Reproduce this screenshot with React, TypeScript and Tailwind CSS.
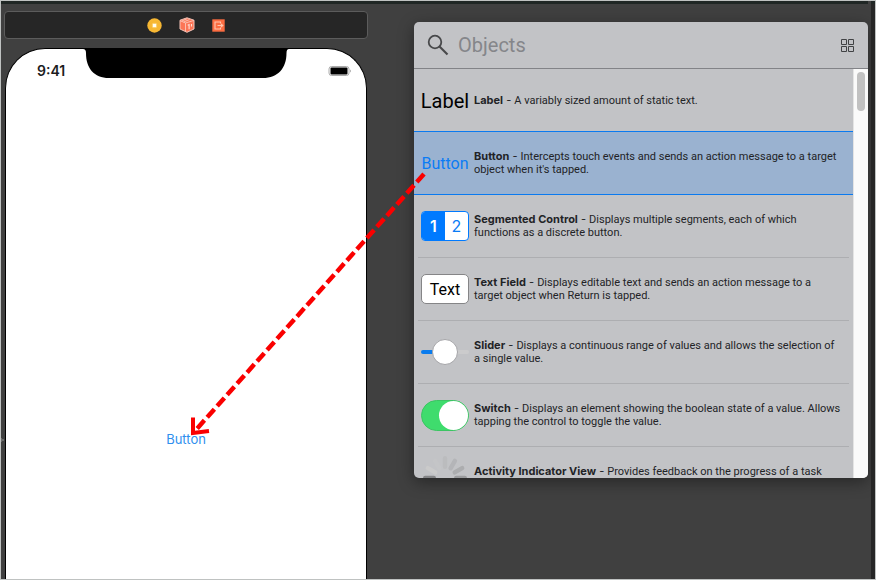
import type { ReactNode } from "react";

type LibraryItem = {
  name: string;
  lines: string[];
  preview: ReactNode;
  selected?: boolean;
};

function Spinner() {
  const shades = ["#bbbcbe", "#b4b5b8", "#acadaf", "#9b9c9e", "#97989a", "#939496", "#909193", "#8c8d8f", "#88898b", "#848587", "#cacaca", "#c4c5c7"];
  return (
    <svg viewBox="0 0 48 48" className="size-12" aria-hidden="true">
      {shades.map((shade, i) => (
        <rect key={i} x="21.8" y="2" width="4.400" height="13" rx="2.200" fill={shade} transform={`rotate(${i * 30} 24 24)`} />
      ))}
    </svg>
  );
}

const items: LibraryItem[] = [
  {
    name: "Label",
    lines: ["A variably sized amount of static text."],
    preview: <span className="pt-px text-xl text-black font-[Roboto,sans-serif]">Label</span>,
  },
  {
    name: "Button",
    lines: ["Intercepts touch events and sends an action message to a target", "object when it's tapped."],
    preview: (
      <button type="button" className="pt-px text-base text-[#0a7cf5] font-[Roboto,sans-serif]">
        Button
      </button>
    ),
    selected: true,
  },
  {
    name: "Segmented Control",
    lines: ["Displays multiple segments, each of which", "functions as a discrete button."],
    preview: (
      <div className="flex h-[30px] w-12 overflow-hidden rounded-[4px] border border-[#007aff] bg-white text-base font-[Inter,sans-serif]">
        <button type="button" className="flex-1 bg-[#007aff] font-semibold text-white">1</button>
        <button type="button" className="flex-1 text-[#0a7cf5]">2</button>
      </div>
    ),
  },
  {
    name: "Text Field",
    lines: ["Displays editable text and sends an action message to a", "target object when Return is tapped."],
    preview: (
      <input
        type="text"
        aria-label="Text Field"
        defaultValue="Text"
        className="h-[30px] w-12 rounded-[5px] border border-[#858587] bg-white text-center text-base text-black outline-none font-[Roboto,sans-serif]"
      />
    ),
  },
  {
    name: "Slider",
    lines: ["Displays a continuous range of values and allows the selection of", "a single value."],
    preview: (
      <input
        type="range"
        aria-label="Slider"
        defaultValue={50}
        className="h-[26px] w-12 appearance-none bg-transparent [&::-webkit-slider-runnable-track]:h-1 [&::-webkit-slider-runnable-track]:rounded-full [&::-webkit-slider-runnable-track]:bg-linear-to-r [&::-webkit-slider-runnable-track]:from-[#0a7cee] [&::-webkit-slider-runnable-track]:from-50% [&::-webkit-slider-runnable-track]:to-[#cbcbcc] [&::-webkit-slider-runnable-track]:to-50% [&::-webkit-slider-thumb]:-mt-[11px] [&::-webkit-slider-thumb]:size-[26px] [&::-webkit-slider-thumb]:appearance-none [&::-webkit-slider-thumb]:rounded-full [&::-webkit-slider-thumb]:border [&::-webkit-slider-thumb]:border-[#a5a5a8] [&::-webkit-slider-thumb]:bg-white"
      />
    ),
  },
  {
    name: "Switch",
    lines: ["Displays an element showing the boolean state of a value. Allows", "tapping the control to toggle the value."],
    preview: (
      <label className="flex h-[31px] w-12 rounded-full border border-[#3cc463] bg-[#3fdc6d]">
        <input type="checkbox" role="switch" aria-label="Switch" defaultChecked className="ml-auto size-[29px] appearance-none rounded-full bg-white" />
      </label>
    ),
  },
  {
    name: "Activity Indicator View",
    lines: ["Provides feedback on the progress of a task", "\u00a0"],
    preview: <Spinner />,
  },
];

function SceneDock() {
  return (
    <div className="flex h-7 items-center justify-center gap-[17px] rounded-[4px] border border-[#5c5c5c] bg-[#262626]">
      <svg viewBox="0 0 15 15" className="size-[15px]" aria-label="View controller">
        <circle cx="7.5" cy="7.5" r="7.2" fill="#f7b733" />
        <rect x="5.4" y="5.4" width="4.2" height="4.2" rx="1" fill="#fffdf2" stroke="#fbd06b" />
      </svg>
      <svg viewBox="0 0 16 16" className="size-4" aria-label="First responder">
        <path d="M8 .8 15 3.2V12l-7 3.3L1 12V3.2z" fill="#fc7556" stroke="#f6c4b8" />
        <path d="M1 3.6 6.5 6 15 3.4M6.5 6v8.5M2.8 4l5.6-2.4M4.6 5l6-2.5" fill="none" stroke="#fbc5b7" strokeWidth=".9" />
        <path d="m8.7 8.3 1.4-.7v4.6M12.5 7v2.5" fill="none" stroke="#ffe0d7" strokeWidth="1.1" />
      </svg>
      <svg viewBox="0 0 13 13" className="size-[13px]" aria-label="Exit">
        <path d="M.3.3h12.4v12.4H.3z" fill="#fb6c41" />
        <path d="M8.500 4.600V3H3v7h5.500V8.500M5.500 6.500h5M9 4.800l1.800 1.700L9 8.200" fill="none" stroke="#ffc6ae" strokeWidth="1.100" />
      </svg>
    </div>
  );
}

function Phone() {
  return (
    <section className="relative mx-px mt-[9px] flex-1 rounded-t-[40px] border border-b-0 border-black bg-white">
      <svg viewBox="0 0 206 30" className="absolute -top-px left-[77px] h-[30px] w-[206px]" aria-hidden="true">
        <path d="M0 0H206V1Q203.500 1 203.500 5C203.500 20 195 30 180 30H26C11 30 3 20 3 5Q3 1 0 1z" fill="#000" />
      </svg>
      <div className="flex items-center justify-between pt-3 pr-[14px] pl-[31px]">
        <span className="text-sm font-semibold text-[#1c1c1e]">9:41</span>
        <svg viewBox="0 0 24 12" className="h-3 w-6" aria-label="Battery">
          <rect x="1" y="1.500" width="20" height="9" rx="2.500" fill="#fff" stroke="#aaa" />
          <rect x="2.500" y="2.500" width="17" height="7" rx="1" />
          <path d="M22 4.500q2 1.500 0 3z" fill="#aaa" />
        </svg>
      </div>
      <div className="flex justify-center pt-[348px]">
        <button type="button" className="text-[13px] leading-5 text-[#2f8fee]">Button</button>
      </div>
    </section>
  );
}

function LibraryRow({ item }: { item: LibraryItem }) {
  return (
    <li className={item.selected ? "relative -mt-px border-y border-[#0a7af0] bg-[#9ab2d0]" : "relative"}>
      <div className={item.selected ? "flex h-[62px] items-center pl-[7px]" : "ml-1 mr-1 flex h-[63px] items-center border-b border-[#adaeb1] pl-[3px]"}>
        <div className="flex w-12 shrink-0 justify-center">{item.preview}</div>
        <p className="ml-[5px] text-[11px] leading-[13px] whitespace-nowrap text-[#222326] font-[Roboto,sans-serif]">
          <span className="font-[Inter,sans-serif]">
            <strong className="font-bold">{item.name}</strong>{" - "}
          </span>
          {item.lines[0]}
          {item.lines[1] && <><br />{item.lines[1]}</>}
        </p>
      </div>
    </li>
  );
}

function ObjectLibrary() {
  return (
    <section className="mt-[17px] flex h-[456px] max-w-[454px] flex-1 flex-col overflow-hidden rounded-[5px] bg-[#c2c3c6] shadow-[0_4px_16px_rgba(0,0,0,0.4)]">
      <div className="flex h-[47px] shrink-0 items-center border-b border-[#828387] pr-[14px] pl-[13px]">
        <svg viewBox="0 0 22 22" className="size-[22px]" fill="none" stroke="#48494b" aria-hidden="true">
          <circle cx="8" cy="8" r="6.300" strokeWidth="1.800" />
          <path d="m12.500 12.500 8 8" strokeWidth="2.200" />
        </svg>
        <input
          type="search"
          aria-label="Search objects"
          placeholder="Objects"
          className="ml-[9px] min-w-0 flex-1 bg-transparent text-xl outline-none placeholder:text-[#85868a] font-[Roboto,sans-serif]"
        />
        <button type="button" aria-label="Grid view">
          <svg viewBox="0 0 13 13" className="size-[13px]" fill="none" stroke="#414244">
            <path d="M.5.5h5v5h-5zM7.500.5h5v5h-5zM.5 7.500h5v5h-5zM7.500 7.500h5v5h-5z" />
          </svg>
        </button>
      </div>
      <div className="flex min-h-0 flex-1">
        <ul className="min-w-0 flex-1 overflow-hidden">
          {items.map((item) => (
            <LibraryRow key={item.name} item={item} />
          ))}
        </ul>
        <div className="w-[15px] shrink-0 border-l border-[#e4e4e4] bg-[#fafafa] pt-[3px] pl-[3px]">
          <div className="h-[39px] w-2 rounded-full bg-[#c1c1c1]" />
        </div>
      </div>
    </section>
  );
}

function DragArrow() {
  return (
    <svg width="262" height="270" viewBox="186 170 262 270" className="pointer-events-none absolute top-[169px] left-[185px]" fill="none" stroke="#fa0000" aria-hidden="true">
      <path d="M424 174 194 432" strokeWidth="4.500" strokeDasharray="10.800 4.200" />
      <path d="M193 417.500V433l16-2" strokeWidth="4" />
    </svg>
  );
}

export default function App() {
  return (
    <main className="relative flex h-screen overflow-hidden border border-[#bfc2c1] bg-[#404040] font-[Inter,sans-serif]">
      <div className="flex min-w-0 flex-1 border-t-[3px] border-[#202725] pl-[3px]">
        <div className="flex w-[364px] shrink-0 flex-col pt-[7px]">
          <SceneDock />
          <Phone />
        </div>
        <div className="ml-[46px] flex min-w-0 flex-1 pt-px">
          <ObjectLibrary />
        </div>
      </div>
      <div className="ml-[3px] w-1 shrink-0 border-t-[3px] border-[#202725] bg-[#262626]" />
      <svg viewBox="0 0 3 4" className="absolute top-[437px] left-0 h-1 w-[3px]" aria-hidden="true">
        <path d="M0 0h1v1h2v2H1v1H0z" fill="#6b6b6b" />
      </svg>
      <DragArrow />
    </main>
  );
}
